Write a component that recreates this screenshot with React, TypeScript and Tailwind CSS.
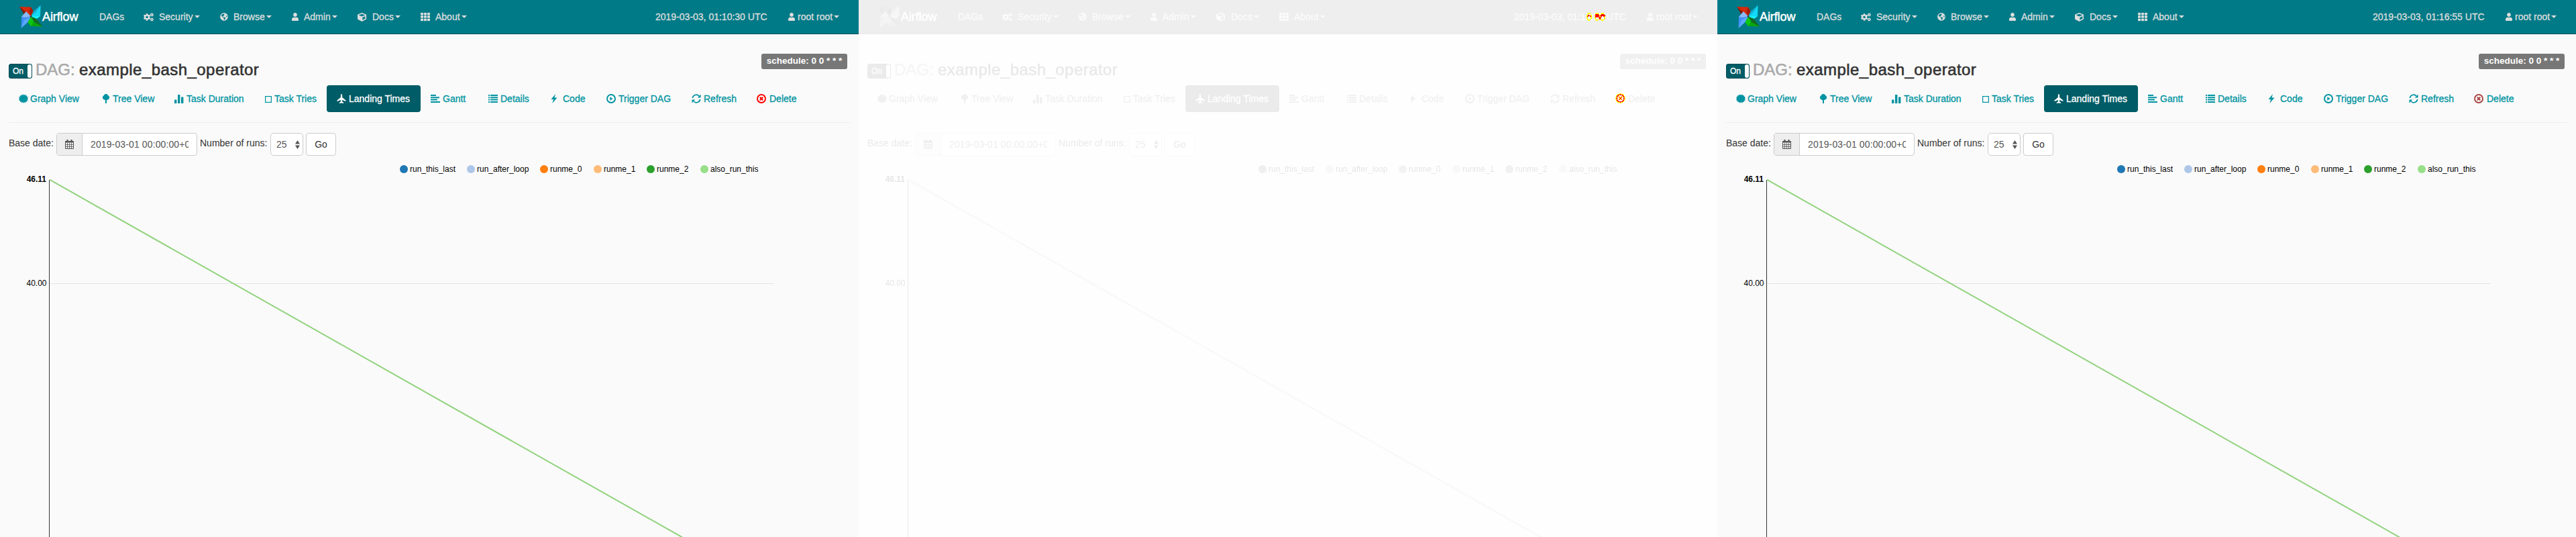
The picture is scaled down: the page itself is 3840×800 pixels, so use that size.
import { ReactNode } from "react";
import { FaCogs, FaGlobeAmericas, FaUser, FaCube, FaTh } from "react-icons/fa";

const Glyph = ({ children, className = "" }: { children: ReactNode; className?: string }) => (
  <svg viewBox="0 0 14 14" className={`h-[14px] w-[14px] shrink-0 ${className}`} fill="currentColor">{children}</svg>
);

const Bars = () => (
  <Glyph><rect x="0" y="8.5" width="3.4" height="5.5" rx=".5" /><rect x="5" y="1" width="3.4" height="13" rx=".5" /><rect x="10" y="4.5" width="3.4" height="9.5" rx=".5" /></Glyph>
);
const Burst = () => (
  <Glyph><path d="M7 0l1 1.9L9.7.5l.4 2.1 2-.7-.3 2.2 2.1.1-1 1.8 1.1 1-1.1 1 1 1.8-2.1.2.3 2.1-2-.7-.4 2.2L8 12.100 7 14l-1-1.900-1.700 1.500-.4-2.200-2 .7.3-2.100-2.100-.2 1-1.800L0 7l1.100-1-1-1.800 2.100-.1L1.900 1.900l2 .7L4.300.5 6 1.900z" /></Glyph>
);
const Leaf = () => (
  <Glyph><path d="M7 0C9 0 9.900 1.300 10.100 2.300 11.300 2.700 12.300 4 12.100 5.600 11.900 7.700 10 9 8 9V14H6V9C4 9 2.100 7.700 1.900 5.600 1.800 4 2.700 2.700 3.900 2.300 4.100 1.300 5 0 7 0z" /></Glyph>
);
const Plane = () => (
  <Glyph><path d="M7 0c.8 0 1.100 1.100 1.100 2.200v2.800l5.400 4.600v1.500L8.100 9v2.300l2.200 1.700V14L7.500 13.400h-1L3.700 14v-1l2.200-1.700V9L.5 11.100V9.600l5.400-4.600V2.200C5.900 1.100 6.200 0 7 0z" /></Glyph>
);
const AlignLeft = () => (
  <Glyph><path d="M0 1h8v2H0zM0 4.300h13v2H0zM0 7.600h10v2H0zM0 11h14v2H0z" /></Glyph>
);
const List = () => (
  <Glyph><path d="M0 1h2v2H0zM3 1h11v2H3zM0 4.300h2v2H0zM3 4.300h11v2H3zM0 7.600h2v2H0zM3 7.600h11v2H3zM0 11h2v2H0zM3 11h11v2H3z" /></Glyph>
);
const Flash = () => (
  <Glyph><path d="M9 0L2.500 8H6L4.300 14 11.500 5.500H7.500z" /></Glyph>
);
const Play = () => (
  <Glyph><circle cx="7" cy="7" r="6" fill="none" stroke="currentColor" strokeWidth="1.900" /><path d="M5.300 4.300L9.500 7l-4.200 2.700z" /></Glyph>
);
const Refresh = () => (
  <Glyph><path d="M1.300 6A5.700 5.700 0 0 1 11 3M12.700 8A5.700 5.700 0 0 1 3 11" fill="none" stroke="currentColor" strokeWidth="1.700" /><path d="M13.500 .5v5H8.700zM.5 13.500v-5h4.800z" /></Glyph>
);
const Remove = ({ className }: { className: string }) => (
  <Glyph className={className}><circle cx="7" cy="7" r="6" fill="none" stroke="currentColor" strokeWidth="1.900" /><path d="M4.800 4.800l4.400 4.400M9.200 4.800L4.800 9.200" stroke="currentColor" strokeWidth="2" /></Glyph>
);
const Square = () => (
  <svg viewBox="0 0 10 12" className="mt-[2px] h-[12px] w-[10px] shrink-0"><rect x=".6" y="1.600" width="8.800" height="8.800" fill="none" stroke="currentColor" strokeWidth="1.200" /></svg>
);
const Calendar = () => (
  <svg viewBox="0 0 13 14" className="h-[14px] w-[13px]" fill="none" stroke="currentColor">
    <path d="M.5 2.500h12v11H.5z" />
    <path d="M.5 3.500h12" strokeWidth="2" />
    <path d="M.5 7.500h12M.5 10.500h12M3.500 5v8.500M6.500 5v8.500M9.500 5v8.500" strokeWidth=".8" />
    <path d="M3.500 0v3M9.500 0v3" strokeWidth="2.200" />
  </svg>
);
const Pinwheel = () => (
  <svg viewBox="0 0 34 34" className="h-[34px] w-[34px] shrink-0">
    <path d="M0 2L17 2.500 20.500 9 17 16.500 6.500 9z" fill="#d42a0a" />
    <path d="M0 2L17 16.500 6.500 13z" fill="#7d1d0c" />
    <path d="M17 2.500L20.500 9 17 16.500 14.500 8z" fill="#a31c0a" />
    <path d="M31.500 0L31 16 25.500 20 17 16.500 24.500 6z" fill="#11d8f5" />
    <path d="M31.500 0L20.500 9 17 16.500 24.500 10z" fill="#17a9c9" />
    <path d="M31 16L25.500 20 17 16.500z" fill="#19f3ff" />
    <path d="M34 31.500L17 31 12.500 25 17 16.500 27 24z" fill="#08a80c" />
    <path d="M34 31.500L25.500 20 17 16.500 22 25z" fill="#126b26" />
    <path d="M17 31L12.500 25 17 16.500 21 24z" fill="#0cc813" />
    <path d="M2.500 34L3 17 8 13 17 16.500 9 26z" fill="#3f8ef5" />
    <path d="M2.500 34L12.500 25 17 16.500 7 22z" fill="#5aa7ff" />
    <path d="M3 17L10 9 17 16.500 9 18z" fill="#8bb9f5" />
    <circle cx="17" cy="16.500" r="1.300" fill="#28323c" />
  </svg>
);

const Caret = () => (
  <svg viewBox="0 0 8 4" className="ml-[2px] h-[4px] w-[8px] shrink-0" fill="currentColor"><path d="M0 0h8L4 4z" /></svg>
);

const menus = [
  { label: "Security", box: "w-[114px]", gap: "w-[23px]", icon: <FaCogs className="h-[15px] w-[15px]" /> },
  { label: "Browse", box: "w-[107px]", gap: "w-[20px]", icon: <FaGlobeAmericas className="h-[12px] w-[12px]" /> },
  { label: "Admin", box: "w-[98px]", gap: "w-[18px]", icon: <FaUser className="h-[12px] w-[10px]" preserveAspectRatio="none" /> },
  { label: "Docs", box: "w-[94px]", gap: "w-[22px]", icon: <FaCube className="h-[13px] w-[13px]" /> },
  { label: "About", box: "w-[100px]", gap: "w-[22px]", icon: <FaTh className="h-[14px] w-[14px]" /> },
];

const legend = [
  { name: "run_this_last", dot: "bg-[#1f77b4]", box: "w-[100px]" },
  { name: "run_after_loop", dot: "bg-[#aec7e8]", box: "w-[109px]" },
  { name: "runme_0", dot: "bg-[#ff7f0e]", box: "w-[80px]" },
  { name: "runme_1", dot: "bg-[#ffbb78]", box: "w-[79px]" },
  { name: "runme_2", dot: "bg-[#2ca02c]", box: "w-[80px]" },
  { name: "also_run_this", dot: "bg-[#98df8a]", box: "w-[90px]" },
];

function Screen({ time, remove }: { time: ReactNode; remove: string }) {
  const tabs = [
    { label: "Graph View", box: "w-[123px]", gap: "w-[17px]", icon: <Burst /> },
    { label: "Tree View", box: "w-[109px]", gap: "w-[17px]", icon: <Leaf /> },
    { label: "Task Duration", box: "w-[135px]", gap: "w-[18px]", icon: <Bars /> },
    { label: "Task Tries", box: "w-[107px]", gap: "w-[14px]", icon: <Square /> },
    { label: "Landing Times", box: "w-[140px]", gap: "w-[18px]", icon: <Plane />, active: true },
    { label: "Gantt", box: "w-[86px]", gap: "w-[18px]", icon: <AlignLeft /> },
    { label: "Details", box: "w-[91px]", gap: "w-[18px]", icon: <List /> },
    { label: "Code", box: "w-[85px]", gap: "w-[20px]", icon: <Flash /> },
    { label: "Trigger DAG", box: "w-[127px]", gap: "w-[18px]", icon: <Play /> },
    { label: "Refresh", box: "w-[97px]", gap: "w-[18px]", icon: <Refresh /> },
    { label: "Delete", box: "w-[90px]", gap: "w-[19px]", icon: <Remove className={remove} /> },
  ];
  return (
    <div className="h-[800px] w-[1280px] overflow-hidden bg-[#fafafa] text-[14px] text-[#333]">
      <nav className="flex h-[51px] items-center border-b border-[#004d58] bg-[#007a87] pl-[29px] text-[#dedede]">
        <Pinwheel />
        <span className="w-[85px] text-[18px] leading-[50px] font-normal tracking-[-0.1px] text-white [-webkit-text-stroke:0.5px_#fff]">Airflow</span>
        <span className="w-[66px] [-webkit-text-stroke:0.3px]">DAGs</span>
        {menus.map((m) => (
          <div key={m.label} className={`flex items-center ${m.box}`}>
            <span className={`flex shrink-0 items-center ${m.gap}`}>{m.icon}</span>
            <span className="[-webkit-text-stroke:0.3px]">{m.label}</span>
            <Caret />
          </div>
        ))}
        <span className="ml-[250px] w-[198px] whitespace-nowrap [-webkit-text-stroke:0.3px]">{time}</span>
        <FaUser className="mr-[4px] h-[12px] w-[10px]" preserveAspectRatio="none" />
        <span className="[-webkit-text-stroke:0.3px]">root root</span>
        <Caret />
      </nav>

      <div className="flex h-[76px] justify-between pl-[13px] pr-[17px]">
        <div className="flex items-center pt-[34px]">
          <div className="flex h-[22px] w-[35px] items-center justify-between rounded-[3px] border border-[#004a54] bg-[#005c66] pl-[5px] pr-0 text-[12px] text-white">
            <span className="[-webkit-text-stroke:0.3px]">On</span>
            <span className="h-[20px] w-[6px] rounded-[3px] bg-white" />
          </div>
          <h3 className="-mt-[5px] ml-[5px] flex text-[24px] [-webkit-text-stroke:0.6px]">
            <span className="w-[65px] text-[#aaa]">DAG:</span>
            <span className="tracking-[0.45px] text-[#333]">example_bash_operator</span>
          </h3>
        </div>
        <div className="mt-[29px] flex h-[23px] w-[128px] items-center justify-center rounded-[3px] bg-[#777] text-[13.500px] font-bold text-white">schedule: 0 0 * * *</div>
      </div>

      <div className="flex h-[40px] pl-[13px] text-[#0093a1]">
        {tabs.map((t) => (
          <div key={t.label} className={`flex h-[40px] shrink-0 items-center rounded-[4px] pl-[15px] ${t.box} ${t.active ? "bg-[#005c66] text-white" : ""}`}>
            <span className={`-mt-[1px] flex shrink-0 items-center ${t.gap}`}>{t.icon}</span>
            <span className="whitespace-nowrap [-webkit-text-stroke:0.3px]">{t.label}</span>
          </div>
        ))}
      </div>

      <div className="mx-[13px] mt-[15px] h-px bg-[#eee]" />

      <div className="mt-[15px] flex h-[34px] pl-[13px]">
        <span className="w-[71px] leading-[30px]">Base date:</span>
        <div className="flex h-[34px] w-[210px] rounded-[4px] border border-[#ccc] bg-white text-[#555]">
          <span className="flex w-[38px] shrink-0 items-center justify-center rounded-l-[3px] border-r border-[#ccc] bg-[#eee]"><Calendar /></span>
          <span className="ml-[12px] w-[146px] shrink-0 overflow-hidden leading-[33px] tracking-[0.12px] whitespace-nowrap">2019-03-01 00:00:00+0</span>
        </div>
        <span className="ml-[4px] w-[105px] leading-[30px]">Number of runs:</span>
        <div className="flex h-[34px] w-[49px] items-center justify-between rounded-[5px] border border-[#ccc] bg-white pr-[4px] pl-[8px] text-[#555]">
          <span className="leading-[30px]">25</span>
          <svg viewBox="0 0 7 13" className="h-[13px] w-[7px]" fill="currentColor"><path d="M3.500 0L7 5.500H0zM3.500 13L0 7.500h7z" /></svg>
        </div>
        <div className="ml-[4px] flex h-[34px] w-[45px] items-center justify-center rounded-[4px] border border-[#ccc] bg-white">Go</div>
      </div>

      <div className="flex h-[35px] items-center pt-[5px] pl-[596px] text-[12px] text-black">
        {legend.map((l) => (
          <div key={l.name} className={`flex shrink-0 items-center ${l.box}`}>
            <span className={`mr-[3px] h-[12px] w-[12px] rounded-full ${l.dot}`} />
            {l.name}
          </div>
        ))}
      </div>

      <svg viewBox="0 267 1280 533" className="block h-[533px] w-[1280px] overflow-visible" fontFamily="Liberation Sans, sans-serif">
        <path d="M74 422.500H1153" stroke="#e5e5e5" />
        <path d="M73.500 268V800" stroke="#333" />
        <path d="M74 267.700L1026 805.500" stroke="#92d37f" strokeWidth="2" />
        <text x="69" y="271" textAnchor="end" fontSize="12" fontWeight="bold" fill="#000">46.11</text>
        <text x="69.500" y="426" textAnchor="end" fontSize="12" fill="#000">40.00</text>
      </svg>
    </div>
  );
}

/* Highlights over the pixels that changed between the two screens. */
const ClockDiff = () => (
  <svg viewBox="0 0 30 14" className="absolute top-[18px] left-[1084px] h-[14px] w-[30px]" fill="none" shapeRendering="crispEdges">
    <ellipse cx="5" cy="7" rx="3.200" ry="5.200" stroke="#ff0" strokeWidth="1.500" />
    <ellipse cx="17" cy="7" rx="3.200" ry="5.200" stroke="#ff0" strokeWidth="1.500" />
    <ellipse cx="25" cy="7" rx="3.200" ry="5.200" stroke="#ff0" strokeWidth="1.500" />
    <path d="M2 6h1v-2h2v1h2v1h1v1h-2v-1h-2v1h-2zM14 3h5v1h1v3h-2v1h-4zM22 4h1v-1h4v1h2v2h-1v1h-2v-1h-2v1h-1v2h-1v2h-2v-2h-1v-2h2v1h1v-2h-1z" fill="#f00" />
  </svg>
);
const DeleteDiff = () => (
  <svg viewBox="0 0 15 15" className="absolute top-[139px] left-[1128px] h-[15px] w-[15px]" fill="none" shapeRendering="crispEdges">
    <circle cx="7.500" cy="7.500" r="6.600" fill="#fefefe" stroke="#ff0" strokeWidth="1.500" />
    <circle cx="7.500" cy="7.500" r="5.500" stroke="#f00" strokeWidth="1.300" />
    <path d="M5 5l5 5M10 5l-5 5" stroke="#ff0" strokeWidth="1.500" />
    <path d="M5 5h1v1h-1zM9 5h1v1h-1zM6 6h1v1h1v-1h1v2h-1v1h-2v-1h1v-1h-1zM5 9h1v1h-1zM9 9h1v1h-1z" fill="#f00" />
  </svg>
);

export default function App() {
  return (
    <div className="flex h-[800px] w-[3840px] overflow-hidden bg-white font-['Liberation_Sans',sans-serif]">
      <Screen time="2019-03-03, 01:10:30 UTC" remove="text-[#f00]" />
      <div className="relative h-[800px] w-[1280px]">
        <div className="opacity-10 grayscale">
          <Screen time="2019-03-03, 01:16:55 UTC" remove="text-[#f00]" />
        </div>
        <ClockDiff />
        <DeleteDiff />
      </div>
      <Screen time="2019-03-03, 01:16:55 UTC" remove="text-[#a94442]" />
    </div>
  );
}
